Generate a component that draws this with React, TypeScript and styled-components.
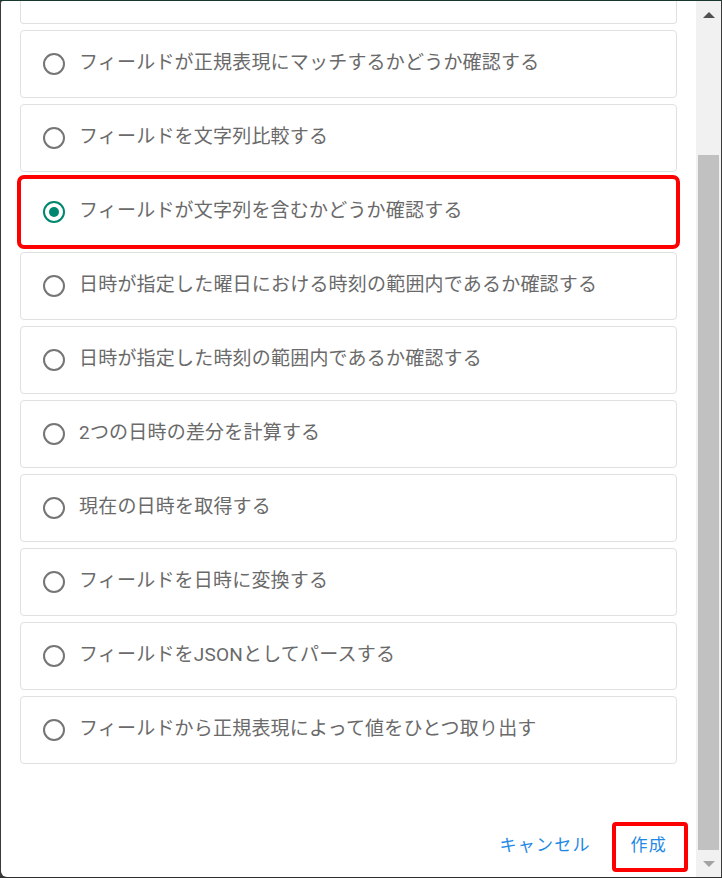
import React from "react";
import styled, { createGlobalStyle, css } from "styled-components";

const GlobalStyle = createGlobalStyle`
  html, body { margin: 0; padding: 0; background: #333; }
  body { font-family: Roboto, "Noto Sans CJK JP", sans-serif; }
  * { box-sizing: border-box; }
`;

const Frame = styled.div`
  width: 722px;
  height: 878px;
  border: 1px solid;
  border-color: #16382f #3a3a3a #2e2e2e #3a3a3a;
  background: #3a3a3a;
`;

const Dialog = styled.div`
  width: 720px;
  height: 876px;
  background: #fff;
  border-radius: 2px 0 0 6px;
  display: flex;
  overflow: hidden;
`;

const Main = styled.div`
  flex: 1;
  display: flex;
  flex-direction: column;
`;

const List = styled.div`
  display: flex;
  flex-direction: column;
  gap: 6px;
  padding: 0 19px 0 19px;
`;

const Card = styled.label<{ $highlight?: boolean; $cut?: boolean }>`
  display: flex;
  align-items: center;
  gap: 14px;
  height: 68px;
  padding: 0 22px;
  border: 1px solid #e0e0e0;
  border-radius: 4px;
  background: #fff;
  ${(p) =>
    p.$cut &&
    css`
      height: 23px;
      border-top: none;
      border-radius: 0 0 4px 4px;
    `}
  ${(p) =>
    p.$highlight &&
    css`
      outline: 4px solid #ff0000;
      outline-offset: -1px;
      border-radius: 4px;
    `}
`;

const Radio = styled.span<{ $checked?: boolean }>`
  width: 22px;
  height: 22px;
  flex: none;
  border-radius: 50%;
  border: 2px solid ${(p) => (p.$checked ? "#00876f" : "#757575")};
  display: flex;
  align-items: center;
  justify-content: center;
  &::after {
    content: "";
    width: 10px;
    height: 10px;
    border-radius: 50%;
    background: #00876f;
    display: ${(p) => (p.$checked ? "block" : "none")};
  }
`;

const Label = styled.span`
  font-size: 19px;
  line-height: 1;
  letter-spacing: 0.2px;
  color: #6a6a6a;
  white-space: nowrap;
  padding-bottom: 3px;
`;

const Footer = styled.div`
  margin-top: auto;
  display: flex;
  justify-content: flex-end;
  padding: 0 8px 5px 0;
`;

const Button = styled.button<{ $highlight?: boolean }>`
  height: 50px;
  padding: 0 17px 3px 15px;
  border: 4px solid ${(p) => (p.$highlight ? "#ff0000" : "transparent")};
  border-radius: 4px;
  background: transparent;
  color: #1e88e5;
  font-family: Roboto, "Noto Sans CJK JP", sans-serif;
  font-size: 17px;
  line-height: 1;
  letter-spacing: 1.2px;
  cursor: pointer;
`;

const Scrollbar = styled.div`
  width: 25px;
  flex: none;
  background: #f1f1f1;
  display: flex;
  flex-direction: column;
  align-items: stretch;
`;

const ArrowBox = styled.div`
  height: 27px;
  display: flex;
  align-items: center;
  justify-content: center;
  flex: none;
`;

const Arrow = styled.span<{ $down?: boolean }>`
  width: 0;
  height: 0;
  border-left: 6px solid transparent;
  border-right: 6px solid transparent;
  ${(p) =>
    p.$down
      ? css`
          border-top: 6px solid #a3a3a3;
        `
      : css`
          border-bottom: 6px solid #505050;
        `}
`;

const Track = styled.div`
  flex: 1;
  display: flex;
  flex-direction: column;
  padding: 0 2px 0 2px;
`;

const Thumb = styled.div`
  margin-top: 127px;
  flex: 1;
  background: #c1c1c1;
`;

const options = [
  "フィールドが正規表現にマッチするかどうか確認する",
  "フィールドを文字列比較する",
  "フィールドが文字列を含むかどうか確認する",
  "日時が指定した曜日における時刻の範囲内であるか確認する",
  "日時が指定した時刻の範囲内であるか確認する",
  "2つの日時の差分を計算する",
  "現在の日時を取得する",
  "フィールドを日時に変換する",
  "フィールドをJSONとしてパースする",
  "フィールドから正規表現によって値をひとつ取り出す",
];

export default function App() {
  const selected = 2;
  return (
    <>
      <GlobalStyle />
      <Frame>
        <Dialog>
          <Main>
            <List>
              <Card $cut />
              {options.map((o, i) => (
                <Card key={o} $highlight={i === selected}>
                  <Radio $checked={i === selected} />
                  <Label>{o}</Label>
                </Card>
              ))}
            </List>
            <Footer>
              <Button>キャンセル</Button>
              <Button $highlight>作成</Button>
            </Footer>
          </Main>
          <Scrollbar>
            <ArrowBox>
              <Arrow />
            </ArrowBox>
            <Track>
              <Thumb />
            </Track>
            <ArrowBox>
              <Arrow $down />
            </ArrowBox>
          </Scrollbar>
        </Dialog>
      </Frame>
    </>
  );
}
